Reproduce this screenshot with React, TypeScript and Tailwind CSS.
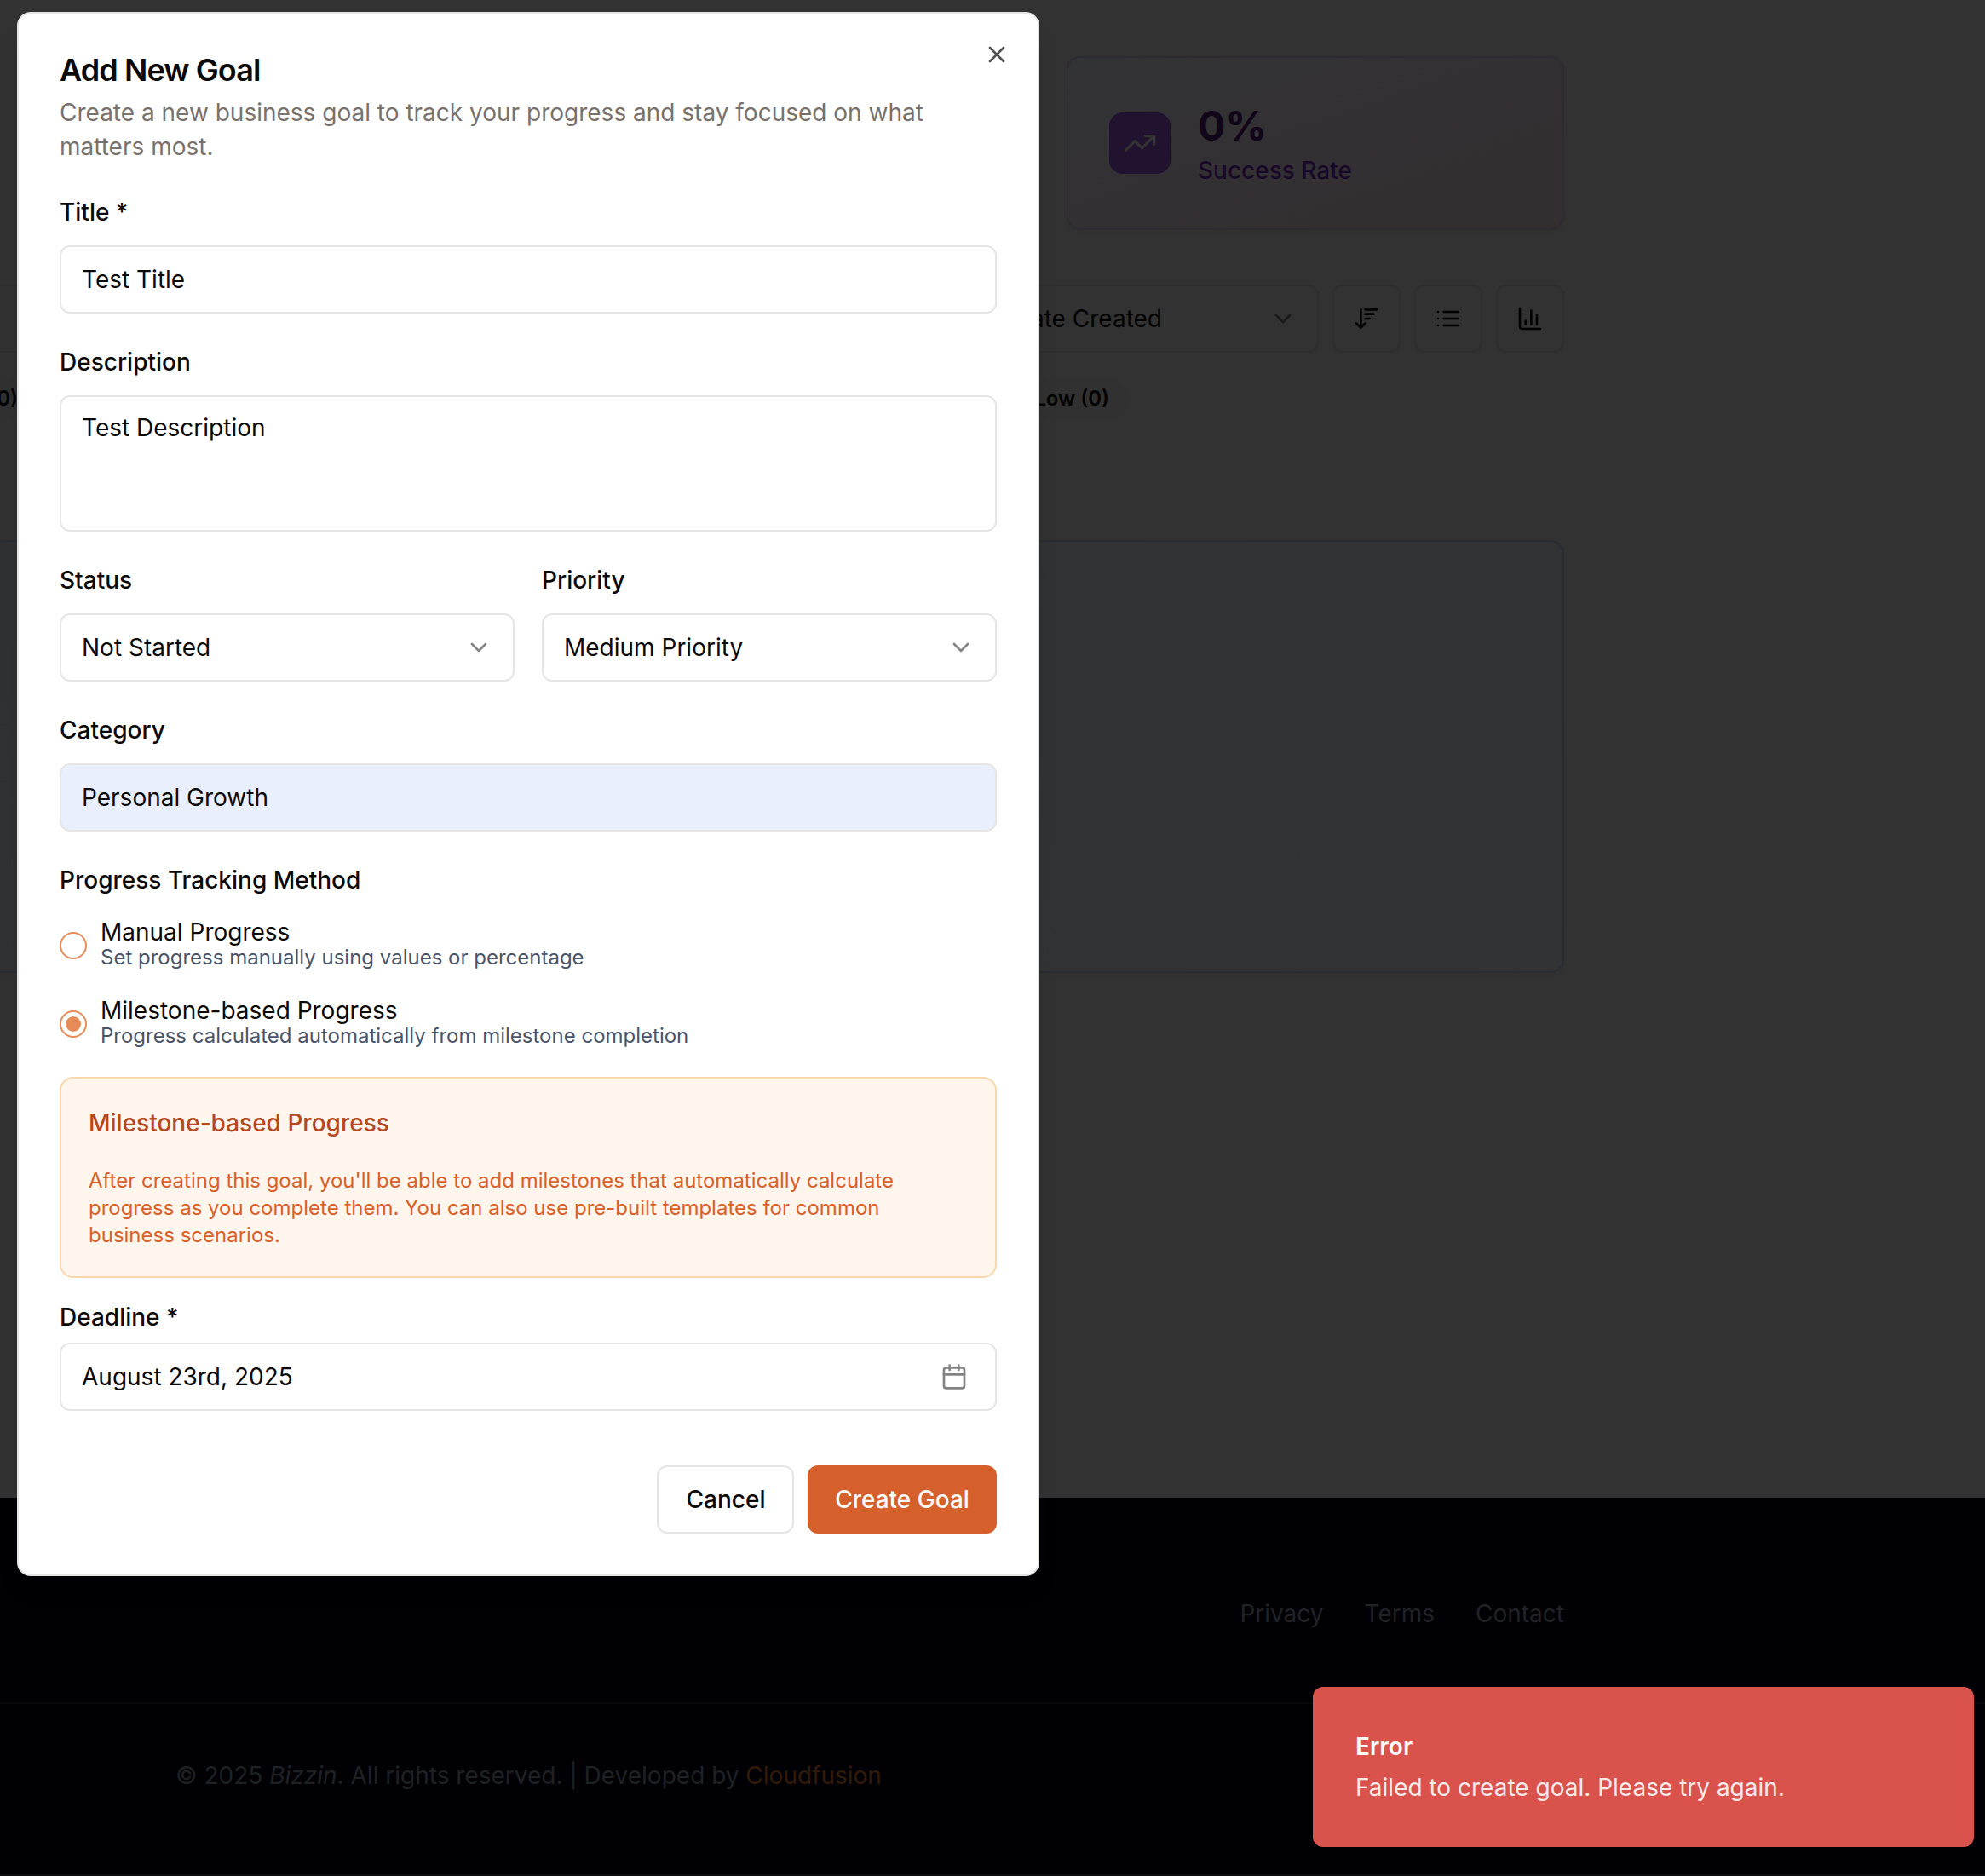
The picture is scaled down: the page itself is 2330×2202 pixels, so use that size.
import React from "react";
import { Calendar, ChevronDown, TrendingUp, X } from "lucide-react";

type IconProps = { className?: string; paths: string[] };

function LineIcon({ className, paths }: IconProps) {
  return (
    <svg
      className={className}
      viewBox="0 0 24 24"
      fill="none"
      stroke="currentColor"
      strokeWidth={2}
      strokeLinecap="round"
      strokeLinejoin="round"
    >
      {paths.map((d) => (
        <path key={d} d={d} />
      ))}
    </svg>
  );
}

const SORT = ["m3 16 4 4 4-4", "M7 20V4", "M11 4h10", "M11 8h7", "M11 12h4"];
const LIST = ["M3 6h.01", "M3 12h.01", "M3 18h.01", "M8 6h13", "M8 12h13", "M8 18h13"];
const BARS = ["M3 3v16a2 2 0 0 0 2 2h16", "M18 17V9", "M13 17V5", "M8 17v-3"];

function ToolButton({ paths }: { paths: string[] }) {
  return (
    <div className="flex size-20 items-center justify-center rounded-[12px] border-2 border-[#2e2e2e] text-[#020202]">
      <LineIcon className="size-8" paths={paths} />
    </div>
  );
}

function Page() {
  return (
    <div className="flex h-[2202px] w-[2330px] flex-col overflow-hidden bg-[#323232]">
      <main className="h-[1758px] w-[1836px] shrink-0 pt-[66px]">
        <div className="flex justify-end">
          <div className="flex h-[204px] w-[584px] items-center gap-8 rounded-[16px] border-2 border-[#2f2b33] bg-linear-to-br from-[#323334] via-[#333033] to-[#332e2f] px-12 shadow-[0_2px_4px_rgba(0,0,0,0.04)]">
            <div className="flex size-[72px] items-center justify-center rounded-[16px] bg-[#21122f]">
              <TrendingUp className="size-10 text-[#333333]" />
            </div>
            <div>
              <div className="text-[48px] leading-[64px] font-bold text-[#110519]">0%</div>
              <div className="text-[28px] leading-10 font-medium text-[#180929]">Success Rate</div>
            </div>
          </div>
        </div>

        <div className="mt-16 flex gap-4">
          <div className="flex h-20 w-[300px] rounded-r-[12px] border-2 border-l-0 border-[#2e2e2e]" />
          <div className="flex h-20 flex-1 items-center justify-end rounded-[12px] border-2 border-[#2e2e2e] pr-6">
            <span className="mr-[126px] text-[28px] leading-10 text-[#020202]">Date Created</span>
            <ChevronDown className="size-8 text-[#1a1a1a]" />
          </div>
          <ToolButton paths={SORT} />
          <ToolButton paths={LIST} />
          <ToolButton paths={BARS} />
        </div>

        <div className="mt-8 flex h-11 justify-between text-2xl leading-8 font-semibold text-[#020202]">
          <div className="flex w-[42px] items-center justify-end rounded-r-full bg-[#313131] pr-[21px]">
            (0)
          </div>
          <div className="mr-[512px] flex items-center rounded-full bg-[#313131] px-[22px]">Low (0)</div>
        </div>

        <div className="mt-[144px] h-[508px] rounded-r-[16px] border-2 border-l-0 border-[#2a2c34] bg-linear-to-br from-[#303133] to-[#323334] shadow-[0_2px_4px_rgba(0,0,0,0.04)]" />
      </main>

      <footer className="flex flex-1 flex-col border-b-2 border-[#0d0d10] bg-[#010105] text-[28px] leading-10 text-[#202225]">
        <div className="flex h-[240px] items-start justify-end gap-12 pt-[116px] pr-[494px]">
          <span>Privacy</span>
          <span>Terms</span>
          <span>Contact</span>
        </div>
        <div className="flex-1 border-t-2 border-[#07080c] pt-16 pl-[206px] text-[#1d2124]">
          © 2025 <em>Bizzin</em>. All rights reserved. | Developed by{" "}
          <span className="text-[#321a0b]">Cloudfusion</span>
        </div>
      </footer>
    </div>
  );
}

function Label({ children }: { children: React.ReactNode }) {
  return <div className="mb-[25px] text-[28px] leading-7 font-medium">{children}</div>;
}

function Select({ label, value }: { label: string; value: string }) {
  return (
    <div className="flex-1">
      <Label>{label}</Label>
      <div className="flex h-20 items-center justify-between rounded-[12px] border-2 border-[#e5e5e5] px-6 text-[28px]">
        {value}
        <ChevronDown className="size-8 opacity-50" />
      </div>
    </div>
  );
}

function Radio({ title, note, checked }: { title: string; note: string; checked?: boolean }) {
  return (
    <div className="flex h-[60px] items-center gap-4">
      <div className="flex size-8 items-center justify-center rounded-full border-2 border-[#e78b57]">
        {checked && <div className="size-[18px] rounded-full bg-[#e78b57]" />}
      </div>
      <div>
        <div className="text-[28px] leading-7">{title}</div>
        <div className="text-2xl leading-8 text-[#4a556a]">{note}</div>
      </div>
    </div>
  );
}

function GoalDialog() {
  return (
    <div className="absolute top-[14px] left-5 h-[1836px] w-[1200px] rounded-[16px] border-2 border-[#e5e5e5] bg-white px-12 pt-12 text-[#0c0a09] shadow-[0_20px_30px_-6px_rgba(0,0,0,0.1)]">
      <X className="absolute top-8 right-8 size-8 opacity-70" />
      <h2 className="text-[36px] leading-9 font-semibold tracking-[-0.025em]">Add New Goal</h2>
      <p className="mt-3 text-[28px] leading-10 text-[#78716c]">
        Create a new business goal to track your progress and stay focused on what
        <br />
        matters most.
      </p>

      <div className="mt-[43px]">
        <Label>Title *</Label>
        <div className="flex h-20 items-center rounded-[12px] border-2 border-[#e5e5e5] px-6 text-[28px]">
          Test Title
        </div>
      </div>

      <div className="mt-[43px]">
        <Label>Description</Label>
        <div className="h-40 rounded-[12px] border-2 border-[#e5e5e5] px-6 pt-4 text-[28px] leading-10">
          Test Description
        </div>
      </div>

      <div className="mt-[43px] flex gap-8">
        <Select label="Status" value="Not Started" />
        <Select label="Priority" value="Medium Priority" />
      </div>

      <div className="mt-[43px]">
        <Label>Category</Label>
        <div className="flex h-20 items-center rounded-[12px] border-2 border-[#e5e5e5] bg-[#e9effd] px-6 text-[28px]">
          Personal Growth
        </div>
      </div>

      <div className="mt-[43px]">
        <Label>Progress Tracking Method</Label>
        <div className="flex flex-col gap-8 pt-[8px]">
          <Radio title="Manual Progress" note="Set progress manually using values or percentage" />
          <Radio
            title="Milestone-based Progress"
            note="Progress calculated automatically from milestone completion"
            checked
          />
        </div>
      </div>

      <div className="mt-8 h-[236px] rounded-[16px] border-2 border-[#f9d7ac] bg-[#fef6ed] px-8 pt-8">
        <div className="text-[28px] leading-10 font-medium text-[#b5481f]">Milestone-based Progress</div>
        <p className="mt-8 text-2xl leading-8 text-[#d9602a]">
          After creating this goal, you'll be able to add milestones that automatically calculate
          <br />
          progress as you complete them. You can also use pre-built templates for common
          <br />
          business scenarios.
        </p>
      </div>

      <div className="mt-8">
        <div className="mb-4 text-[28px] leading-7 font-medium">Deadline *</div>
        <div className="flex h-20 items-center justify-between rounded-[12px] border-2 border-[#e5e5e5] pr-8 pl-6 text-[28px]">
          August 23rd, 2025
          <Calendar className="size-8 opacity-50" />
        </div>
      </div>

      <div className="mt-16 flex justify-end gap-4 text-[28px] font-medium">
        <div className="flex h-20 w-[161px] items-center justify-center rounded-[12px] border-2 border-[#e5e5e5] pl-px">
          Cancel
        </div>
        <div className="flex h-20 w-[222px] items-center justify-center rounded-[12px] bg-[#d6602b] text-[#fafaf9]">
          Create Goal
        </div>
      </div>
    </div>
  );
}

export default function App() {
  return (
    <div className="relative h-[2202px] w-[2330px] overflow-hidden font-['Inter',sans-serif]">
      <Page />
      <GoalDialog />
      <div className="absolute top-[1980px] left-[1541px] h-[188px] w-[776px] rounded-[12px] bg-[#da524c] px-[50px] pt-[50px] text-[28px] leading-10 text-[#fafafa]">
        <div className="font-semibold">Error</div>
        <div className="mt-2 opacity-90">Failed to create goal. Please try again.</div>
      </div>
    </div>
  );
}
